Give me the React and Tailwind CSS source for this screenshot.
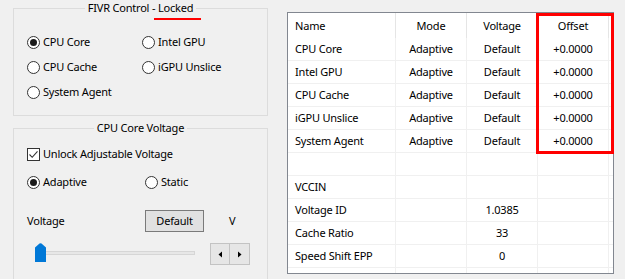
import React from 'react'

function Radio({ checked, label, className }) {
  return (
    <label className={'flex items-center gap-[3px] h-4 ' + (className || '')}>
      <span className="flex items-center justify-center w-[13px] h-[13px] shrink-0 rounded-full border border-[#333333] bg-white">
        {checked && <span className="w-[7px] h-[7px] rounded-full bg-[#1a1a1a]" />}
      </span>
      <span>{label}</span>
    </label>
  )
}

function Checkbox({ checked, label }) {
  return (
    <label className="flex items-center gap-[3px] h-4">
      <span className="flex items-center justify-center w-[13px] h-[13px] shrink-0 border border-[#333333] bg-white">
        {checked && (
          <svg width="11" height="11" viewBox="0 0 11 11">
            <path d="M1.5 5.5 L4.2 8.3 L9.5 2.3" fill="none" stroke="#333333" strokeWidth="1.1" />
          </svg>
        )}
      </span>
      <span>{label}</span>
    </label>
  )
}

const rows = [
  ['CPU Core', 'Adaptive', 'Default', '+0.0000'],
  ['Intel GPU', 'Adaptive', 'Default', '+0.0000'],
  ['CPU Cache', 'Adaptive', 'Default', '+0.0000'],
  ['iGPU Unslice', 'Adaptive', 'Default', '+0.0000'],
  ['System Agent', 'Adaptive', 'Default', '+0.0000'],
  ['', '', '', ''],
  ['VCCIN', '', '', ''],
  ['Voltage ID', '', '1.0385', ''],
  ['Cache Ratio', '', '33', ''],
  ['Speed Shift EPP', '', '0', ''],
  ['', '', '', ''],
]

export default function App() {
  return (
    <div className="w-[625px] h-[279px] overflow-hidden bg-[#f0f0f0] flex font-['Noto_Sans',sans-serif] text-[11px] leading-4 tracking-[-0.2px] text-black">
      {/* left side: group boxes */}
      <div className="w-[268px] pl-[13px] flex flex-col shrink-0">
        <fieldset className="w-[255px] border border-[#dcdcdc] px-[13px] pt-[18px] pb-[15px]">
          <legend className="mx-auto px-[3px]">
            FIVR Control - <span className="relative">Locked<span className="absolute -left-1 -right-2 top-[18px] h-[2px] bg-[#ff0000]" /></span>
          </legend>
          <div className="grid grid-cols-[115px_1fr] gap-y-[9px]">
            <Radio checked label="CPU Core" />
            <Radio label="Intel GPU" />
            <Radio label="CPU Cache" />
            <Radio label="iGPU Unslice" />
            <Radio label="System Agent" />
          </div>
        </fieldset>

        <fieldset className="mt-[4px] w-[255px] border border-[#dcdcdc] px-[13px] pt-[10px] pb-[20px]">
          <legend className="mx-auto px-[3px]">CPU Core Voltage</legend>
          <Checkbox checked label="Unlock Adjustable Voltage" />
          <div className="mt-[12px] flex">
            <Radio checked label="Adaptive" className="w-[118px]" />
            <Radio label="Static" />
          </div>
          <div className="mt-[20px] flex items-center h-[22px]">
            <span className="w-[118px]">Voltage</span>
            <button className="w-[59px] h-[22px] border border-[#7a7a7a] bg-[#e1e1e1] leading-4">Default</button>
            <span className="ml-[25px]">V</span>
          </div>
          <div className="mt-[11px] flex h-[22px]">
            <div className="relative ml-[8px] w-[160px] h-[22px]">
              <div className="absolute left-0 right-0 top-[8px] h-[4px] bg-[#e7e7e7] border border-[#d6d6d6]" />
              <svg className="absolute left-0 top-0" width="11" height="19" viewBox="0 0 11 19">
                <path d="M0 4.5 L4.5 0.5 Q5.5 -0.2 6.5 0.5 L11 4.5 V19 H0 Z" fill="#0078d7" />
              </svg>
            </div>
            <div className="ml-[15px] flex">
              <div className="w-[20px] h-[22px] border border-[#c3c3c3] bg-[#e6e6e6] flex items-center justify-center">
                <svg width="4" height="7" viewBox="0 0 4 7"><path d="M4 0.5 V6.5 L0.5 3.5 Z" fill="#000" /></svg>
              </div>
              <div className="-ml-px w-[21px] h-[22px] border border-[#c3c3c3] bg-[#e6e6e6] flex items-center justify-center">
                <svg width="4" height="7" viewBox="0 0 4 7"><path d="M0 0.5 V6.5 L3.5 3.5 Z" fill="#000" /></svg>
              </div>
            </div>
          </div>
        </fieldset>
      </div>

      {/* right side: list view */}
      <div className="relative ml-[19px] mt-[12px] w-[327px] h-[262px] shrink-0">
        <div className="w-full h-full border border-[#828790] bg-white overflow-hidden">
          <div className="flex h-[25px] items-center">
            <div className="w-[108px] h-full pl-[7px] flex items-center border-r border-[#e5e5e5]">Name</div>
            <div className="w-[71px] h-full flex items-center justify-center border-r border-[#e5e5e5]">Mode</div>
            <div className="w-[71px] h-full flex items-center justify-center border-r border-[#e5e5e5]">Voltage</div>
            <div className="w-[71px] h-full flex items-center justify-center border-r border-[#e5e5e5]">Offset</div>
          </div>
          {rows.map((r, i) => (
            <div key={i} className="flex h-[23px] border-b border-[#f0f0f0]">
              <div className="w-[108px] pl-[7px] flex items-center border-r border-[#f0f0f0]">{r[0]}</div>
              <div className="w-[71px] flex items-center justify-center border-r border-[#f0f0f0]">{r[1]}</div>
              <div className="w-[71px] flex items-center justify-center border-r border-[#f0f0f0]">{r[2]}</div>
              <div className="w-[71px] flex items-center justify-center border-r border-[#f0f0f0]">{r[3]}</div>
            </div>
          ))}
        </div>
        <div className="absolute left-[249px] top-[1px] w-[78px] h-[141px] border-[3px] border-[#ff0000]" />
      </div>
    </div>
  )
}
